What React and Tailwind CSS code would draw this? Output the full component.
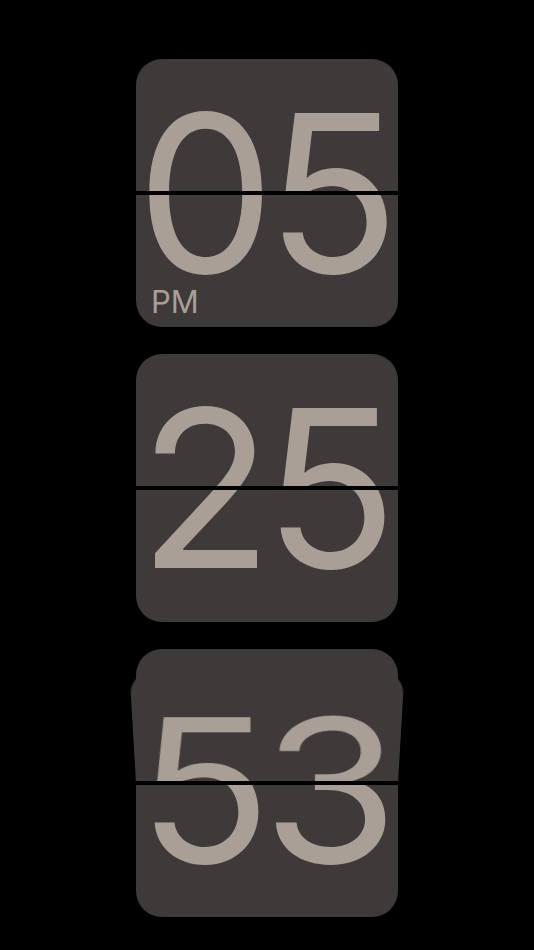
import React from "react";

function HalfContent({ text, bottom }) {
  return (
    <div
      className={
        bottom
          ? "-mt-[134px] h-[268px] flex items-center justify-center pr-[7px] font-['Inter',sans-serif] font-[375] text-[220px] leading-none text-[#aa9f97] tracking-[-9px]"
          : "h-[268px] flex items-center justify-center pr-[7px] font-['Inter',sans-serif] font-[375] text-[220px] leading-none text-[#aa9f97] tracking-[-9px]"
      }
    >
      {text}
    </div>
  );
}

function Card({ text, pm }) {
  return (
    <div className="relative w-[262px] h-[268px] rounded-[26px] bg-[#3d3a39] overflow-hidden">
      <div className="h-[134px] overflow-hidden">
        <HalfContent text={text} />
      </div>
      <div className="h-[134px] overflow-hidden">
        <HalfContent text={text} bottom />
      </div>
      <div className="absolute left-0 right-0 top-[132px] h-[3.5px] bg-black" />
      {pm && (
        <div className="absolute left-[15px] top-[227px] font-['Inter',sans-serif] text-[31px] leading-none text-[#aa9f97]">
          PM
        </div>
      )}
    </div>
  );
}

function FlipCard({ text }) {
  return (
    <div className="relative w-[262px] h-[268px]">
      <div className="h-[134px] rounded-t-[26px] bg-[#3d3a39] overflow-hidden">
        <HalfContent text={text} />
      </div>
      <div className="h-[134px] rounded-b-[26px] bg-[#3d3a39] overflow-hidden">
        <HalfContent text={text} bottom />
      </div>
      <div className="absolute left-0 top-0 w-full h-[134px] origin-bottom [transform:perspective(1700px)_rotateX(-37deg)] rounded-t-[26px] bg-[#3d3a39] overflow-hidden">
        <HalfContent text={text} />
      </div>
      <div className="absolute left-0 right-0 top-[132px] h-[3.5px] bg-black" />
    </div>
  );
}

export default function App() {
  return (
    <div className="w-[534px] h-[950px] bg-black flex flex-col items-center pt-[59px] gap-[27px] overflow-hidden">
      <Card text="05" pm />
      <Card text="25" />
      <FlipCard text="53" />
    </div>
  );
}
